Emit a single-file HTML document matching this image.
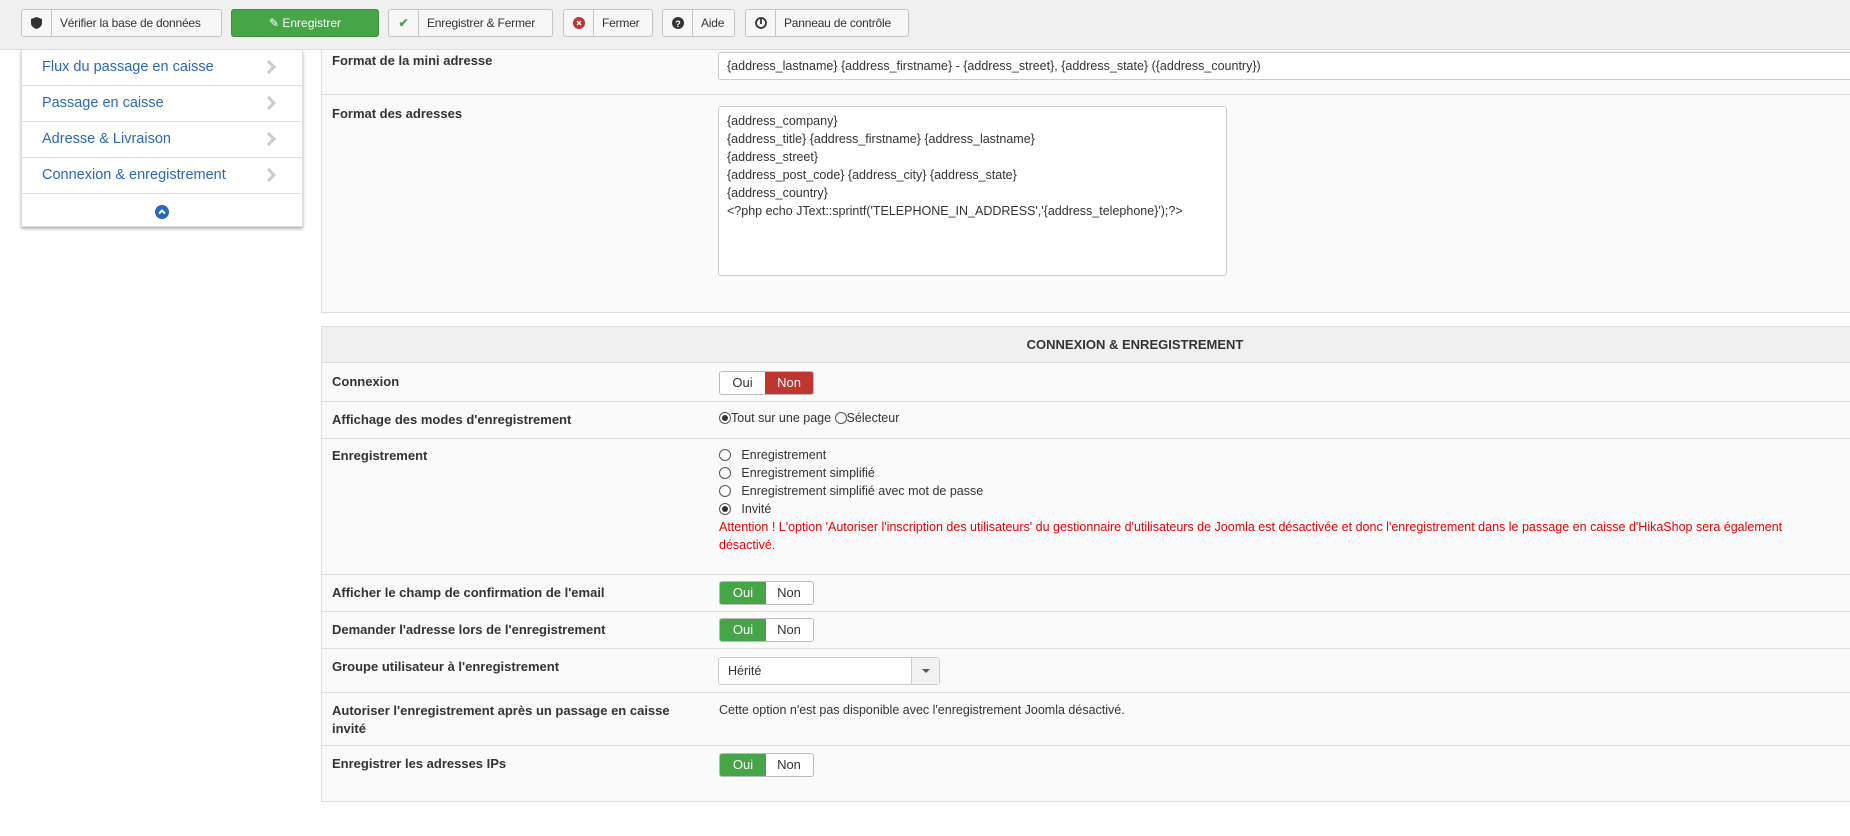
<!DOCTYPE html>
<html><head><meta charset="utf-8"><style>
*{box-sizing:border-box;margin:0;padding:0}
body{width:1850px;height:836px;background:#fff;font-family:"Liberation Sans",sans-serif;font-size:13px;color:#333;position:relative;overflow:hidden}
.a{position:absolute}
.tb{left:0;top:0;width:1850px;height:50px;background:#f0f0f0;border-bottom:1px solid #ddd}
.btn{position:absolute;top:9px;height:28px;border:1px solid #c4c4c4;border-radius:3px;background:#f7f7f7;font-size:12px;line-height:26px;color:#333;display:flex;white-space:nowrap;overflow:hidden}
.btn .ic{width:30px;flex:none;border-right:1px solid #c4c4c4;display:flex;align-items:center;justify-content:center}
.btn .t{padding:0 8px;letter-spacing:-0.2px}
.side{left:21px;top:50px;width:282px;height:177px;background:#fff;border:1px solid #ddd;border-top:none;box-shadow:0 2px 3px rgba(0,0,0,.3)}
.si{height:36px;border-bottom:1px solid #ddd;color:#2a69b8;font-size:14.5px;line-height:34px;padding-left:20px;position:relative}
.si:after{content:"";position:absolute;right:28px;top:12px;width:7px;height:7px;border-right:3px solid #ccc;border-top:3px solid #ccc;transform:rotate(45deg)}
.panel{left:321px;width:1540px;background:#fafafa;border:1px solid #ddd}
.row{position:absolute;left:0;width:100%;border-top:1px solid #ddd}
.lbl{position:absolute;left:10px;font-weight:bold;font-size:13px}
.tog{position:absolute;left:397px;width:95px;height:24px;border:1px solid #bbb;border-radius:3px;overflow:hidden;display:flex;font-size:13px;line-height:22px;background:#fff}
.tog span{width:46px;text-align:center}
.tog .g{background:#46a546;color:#fff}.tog .r{background:#bd362f;color:#fff}
.rad{display:inline-block;width:12px;height:12px;border:1px solid #555;border-radius:50%;vertical-align:-2px;position:relative;background:#fff}
.rad.on:after{content:"";position:absolute;left:2px;top:2px;width:6px;height:6px;border-radius:50%;background:#333}
</style></head><body>
<div class="a tb"></div>
<div class="btn" style="left:21px;width:201px"><div class="ic"><svg width="11" height="12" viewBox="0 0 11 12"><path d="M5.5 0L0 2v4c0 3 2.5 5 5.5 6 3-1 5.5-3 5.5-6V2z" fill="#333"/></svg></div><div class="t">Vérifier la base de données</div></div>
<div class="btn" style="left:231px;width:148px;background:#46a546;border-color:#3a8f3a;color:#fff;justify-content:center">&#9998;&nbsp;Enregistrer</div>
<div class="btn" style="left:388px;width:165px"><div class="ic" style="color:#46a546;font-weight:bold">✔</div><div class="t">Enregistrer &amp; Fermer</div></div>
<div class="btn" style="left:563px;width:90px"><div class="ic"><svg width="12" height="12"><circle cx="6" cy="6" r="6" fill="#bd362f"/><path d="M4 4l4 4M8 4l-4 4" stroke="#fff" stroke-width="1.5"/></svg></div><div class="t">Fermer</div></div>
<div class="btn" style="left:662px;width:73px"><div class="ic"><svg width="12" height="12"><circle cx="6" cy="6" r="6" fill="#333"/><text x="6" y="10" font-size="9" fill="#fff" text-anchor="middle" font-weight="bold">?</text></svg></div><div class="t">Aide</div></div>
<div class="btn" style="left:745px;width:164px"><div class="ic"><svg width="12" height="12"><circle cx="6" cy="6" r="5" fill="none" stroke="#333" stroke-width="1.8"/><path d="M6 2v5" stroke="#333" stroke-width="1.8"/></svg></div><div class="t">Panneau de contrôle</div></div>

<div class="a side">
<div class="si">Flux du passage en caisse</div>
<div class="si">Passage en caisse</div>
<div class="si">Adresse &amp; Livraison</div>
<div class="si">Connexion &amp; enregistrement</div>
<div style="height:35px;display:flex;align-items:center;justify-content:center"><svg width="14" height="14"><circle cx="7" cy="7" r="7" fill="#2a69b8"/><path d="M4 8.5l3-3 3 3" stroke="#fff" stroke-width="2" fill="none"/></svg></div>
</div>

<div class="a panel" style="top:50px;height:263px;border-top:none">
<div class="lbl" style="top:3px">Format de la mini adresse</div>
<div class="a" style="left:396px;top:2px;width:1150px;height:28px;background:#fff;border:1px solid #ccc;border-radius:3px;padding:6px 8px;font-size:12.5px">{address_lastname} {address_firstname} - {address_street}, {address_state} ({address_country})</div>
<div class="row" style="top:44px"></div>
<div class="lbl" style="top:56px">Format des adresses</div>
<div class="a" style="left:396px;top:56px;width:509px;height:170px;background:#fff;border:1px solid #ccc;border-radius:3px;padding:5px 8px;font-size:12.5px;line-height:18px">{address_company}<br>{address_title} {address_firstname} {address_lastname}<br>{address_street}<br>{address_post_code} {address_city} {address_state}<br>{address_country}<br>&lt;?php echo JText::sprintf('TELEPHONE_IN_ADDRESS','{address_telephone}');?&gt;</div>
</div>

<div class="a panel" style="top:326px;height:476px">
<div class="a" style="left:0;top:0;width:100%;height:35px;background:#f0f0f0;text-align:center;line-height:35px;font-weight:bold;font-size:13px;padding-left:88px">CONNEXION &amp; ENREGISTREMENT</div>
<div class="row" style="top:35px"></div>
<div class="lbl" style="top:47px">Connexion</div>
<div class="tog" style="top:44px"><span>Oui</span><span class="r" style="width:49px">Non</span></div>
<div class="row" style="top:74px"></div>
<div class="lbl" style="top:85px">Affichage des modes d'enregistrement</div>
<div class="a" style="left:397px;top:84px;font-size:12.5px"><span class="rad on"></span>Tout sur une page <span class="rad"></span>Sélecteur</div>
<div class="row" style="top:111px"></div>
<div class="lbl" style="top:121px">Enregistrement</div>
<div class="a" style="left:397px;top:119px;font-size:12.5px;line-height:18px">
<div><span class="rad"></span>&nbsp;&nbsp; Enregistrement</div>
<div><span class="rad"></span>&nbsp;&nbsp; Enregistrement simplifié</div>
<div><span class="rad"></span>&nbsp;&nbsp; Enregistrement simplifié avec mot de passe</div>
<div><span class="rad on"></span>&nbsp;&nbsp; Invité</div>
<div style="color:#e00;width:1120px">Attention ! L'option 'Autoriser l'inscription des utilisateurs' du gestionnaire d'utilisateurs de Joomla est désactivée et donc l'enregistrement dans le passage en caisse d'HikaShop sera également désactivé.</div>
</div>
<div class="row" style="top:247px"></div>
<div class="lbl" style="top:258px">Afficher le champ de confirmation de l'email</div>
<div class="tog" style="top:254px"><span class="g">Oui</span><span>Non</span></div>
<div class="row" style="top:284px"></div>
<div class="lbl" style="top:295px">Demander l'adresse lors de l'enregistrement</div>
<div class="tog" style="top:291px"><span class="g">Oui</span><span>Non</span></div>
<div class="row" style="top:321px"></div>
<div class="lbl" style="top:332px">Groupe utilisateur à l'enregistrement</div>
<div class="a" style="left:396px;top:330px;width:222px;height:28px;background:#fff;border:1px solid #ccc;border-radius:3px;font-size:12.5px;line-height:26px;padding-left:9px">Hérité<div class="a" style="right:0;top:0;width:28px;height:26px;background:#f2f2f2;border-left:1px solid #ccc"><div class="a" style="left:10px;top:11px;border:4px solid transparent;border-top-color:#555;border-bottom:none"></div></div></div>
<div class="row" style="top:365px"></div>
<div class="lbl" style="top:375px;line-height:18px">Autoriser l'enregistrement après un passage en caisse<br>invité</div>
<div class="a" style="left:397px;top:376px;font-size:12.5px">Cette option n'est pas disponible avec l'enregistrement Joomla désactivé.</div>
<div class="row" style="top:418px"></div>
<div class="lbl" style="top:429px">Enregistrer les adresses IPs</div>
<div class="tog" style="top:426px"><span class="g">Oui</span><span>Non</span></div>
</div>
</body></html>
